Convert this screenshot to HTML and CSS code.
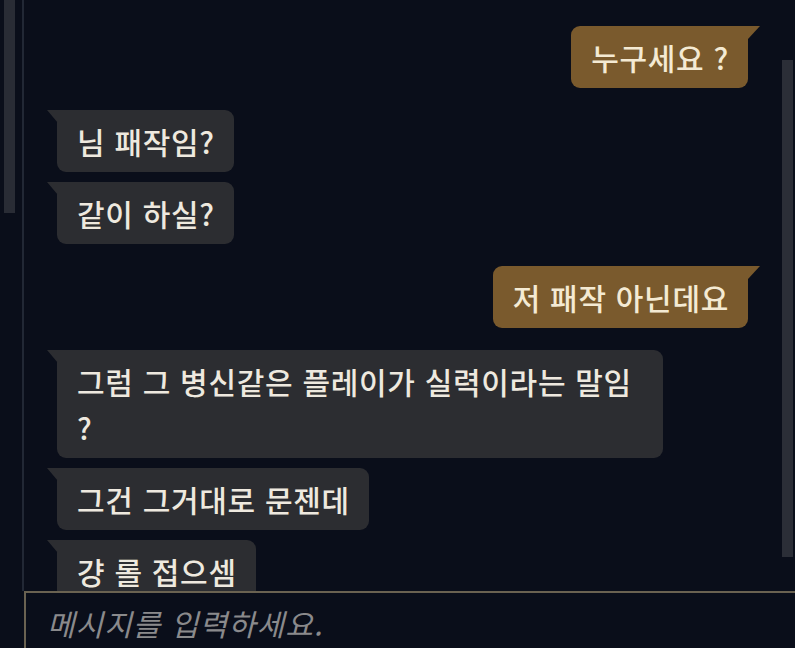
FILE: index.html
```html
<!DOCTYPE html>
<html lang="ko">
<head>
<meta charset="utf-8">
<title>Chat</title>
<link rel="stylesheet" href="styles.css">
</head>
<body>
<div class="app">
  <div class="top">
    <aside class="side"><div class="side-thumb"></div></aside>
    <section class="chat">
      <div class="messages">
        <div class="msg mine">누구세요 ?</div>
        <div class="msg theirs first">님 패작임?</div>
        <div class="msg theirs">같이 하실?</div>
        <div class="msg mine first">저 패작 아닌데요</div>
        <div class="msg theirs first">그럼 그 병신같은 플레이가 실력이라는 말임 ?</div>
        <div class="msg theirs">그건 그거대로 문젠데</div>
        <div class="msg theirs">걍 롤 접으셈</div>
      </div>
      <div class="scroll-thumb"></div>
    </section>
  </div>
  <div class="input"><span class="placeholder">메시지를 입력하세요.</span></div>
</div>
</body>
</html>
```

FILE: styles.css
```css
html, body {
  margin: 0;
  padding: 0;
  background: #0a0e1a;
  width: 795px;
  height: 648px;
  overflow: hidden;
}

.app {
  display: flex;
  flex-direction: column;
  height: 648px;
  font-family: "Noto Sans CJK KR", "Noto Sans", sans-serif;
}

.top {
  display: flex;
  height: 591px;
}

.side {
  flex: none;
  width: 18px;
  padding-left: 4px;
  border-right: 2px solid #222835;
}

.side-thumb {
  width: 11px;
  height: 213px;
  background: #292c35;
}

.chat {
  flex: 1;
  position: relative;
  overflow: hidden;
  padding-left: 1px;
}

.messages {
  display: flex;
  flex-direction: column;
  padding: 26px 47px 0 32px;
}

.msg {
  position: relative;
  max-width: 606px;
  box-sizing: border-box;
  padding: 8px 19px 8px 20px;
  font-size: 30px;
  line-height: 46px;
  font-weight: 500;
  letter-spacing: 0.7px;
  border-radius: 9px;
  margin-top: 10px;
}

.msg:first-child {
  margin-top: 0;
}

.msg.first {
  margin-top: 22px;
}

.msg::before {
  content: "";
  position: absolute;
  top: 0;
  width: 11px;
  height: 13px;
}

.theirs {
  align-self: flex-start;
  background: #2c2d31;
  color: #eee9df;
  border-top-left-radius: 0;
}

.theirs::before {
  left: -10px;
  background: #2c2d31;
  clip-path: polygon(0 0, 100% 0, 100% 100%);
}

.mine {
  align-self: flex-end;
  background: #7a5a2d;
  color: #f4ead3;
  border-top-right-radius: 0;
}

.mine::before {
  right: -12px;
  width: 12px;
  background: #7a5a2d;
  clip-path: polygon(0 0, 100% 0, 0 100%);
}

.scroll-thumb {
  position: absolute;
  right: 2px;
  top: 60px;
  width: 11px;
  height: 497px;
  background: #2b2e37;
}

.input {
  margin-left: 24px;
  flex: 1;
  border-top: 2px solid #6a6251;
  border-left: 2px solid #6a6251;
  padding: 8px 0 0 21px;
  box-sizing: border-box;
}

.placeholder {
  font-size: 30px;
  line-height: 44px;
  letter-spacing: 1px;
  font-style: italic;
  color: #8a8a8c;
}
```
